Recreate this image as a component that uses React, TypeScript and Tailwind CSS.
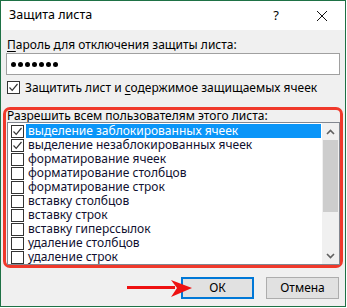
import React from "react";

const items: { label: string; checked: boolean }[] = [
  { label: "выделение заблокированных ячеек", checked: true },
  { label: "выделение незаблокированных ячеек", checked: true },
  { label: "форматирование ячеек", checked: false },
  { label: "форматирование столбцов", checked: false },
  { label: "форматирование строк", checked: false },
  { label: "вставку столбцов", checked: false },
  { label: "вставку строк", checked: false },
  { label: "вставку гиперссылок", checked: false },
  { label: "удаление столбцов", checked: false },
  { label: "удаление строк", checked: false },
];

function Check({ checked }: { checked: boolean }) {
  return (
    <span className="w-[13px] h-[13px] border border-[#333] bg-white flex items-center justify-center shrink-0">
      {checked && (
        <svg width="11" height="11" viewBox="0 0 11 11">
          <polyline points="1.5,5.5 4.2,8.3 9.5,2" fill="none" stroke="#333" strokeWidth="1.2" />
        </svg>
      )}
    </span>
  );
}

export default function App() {
  return (
    <div className="w-[347px] h-[308px] bg-white" style={{ fontFamily: '"Noto Sans", "Liberation Sans", sans-serif' }}>
      <div className="relative w-[346px] h-[307px] border border-[#1e7145] flex flex-col text-[12px] text-black">
        {/* title bar */}
        <div className="h-[29px] bg-white flex items-center pl-[8px] shrink-0">
          <span className="text-[12.5px] flex-1">Защита листа</span>
          <span className="text-[13px] mr-[37px]">?</span>
          <svg width="12" height="12" viewBox="0 0 12 12" className="mr-[17px]">
            <path d="M1 1 L11 11 M11 1 L1 11" stroke="#111" strokeWidth="1" />
          </svg>
        </div>

        {/* body */}
        <div className="flex-1 bg-[#f0f0f0] flex flex-col px-[5px]">
          <div className="h-[14px] leading-[14px] mt-[8px] pl-[1px]">
            <u className="underline-offset-2">П</u>ароль для отключения защиты листа:
          </div>
          <div className="h-[22px] mt-[1px] bg-white border border-[#a0a0a0] flex items-center gap-[2px] pl-[4px]">
            {Array.from({ length: 7 }).map((_, i) => (
              <span key={i} className="w-[5px] h-[5px] rounded-full bg-black" />
            ))}
          </div>
          <div className="flex items-center gap-[5px] mt-[6px] pl-[1px] h-[13px]">
            <Check checked />
            <span className="leading-[13px]">
              Защитить лист и <u className="underline-offset-2">с</u>одержимое защищаемых ячеек
            </span>
          </div>

          {/* red highlight frame */}
          <div className="mt-[13px] -mx-[3px] border-[3px] border-[#f0392b] rounded-[7px] flex flex-col">
            <div className="h-[12px] leading-[12px] pl-[1px]">
              Разре<u className="underline-offset-2">ш</u>ить всем пользователям этого листа:
            </div>
            <div className="ml-[1px] h-[143px] border border-[#828790] bg-white flex">
              <div className="flex-1 flex flex-col pt-[1px]">
                {items.map((it, i) => (
                  <div key={i} className="h-[14px] flex items-center">
                    <span className="pl-[3px] pr-[2px]">
                      <Check checked={it.checked} />
                    </span>
                    <span
                      className={
                        "flex-1 h-[14px] leading-[14px] pl-[2px] mr-[1px] " +
                        (i === 0 ? "bg-[#0a95f8] text-white" : "text-[#101030]")
                      }
                    >
                      {it.label}
                    </span>
                  </div>
                ))}
              </div>
              <div className="w-[17px] bg-[#f0f0f0] flex flex-col">
                <div className="h-[17px] flex items-center justify-center">
                  <svg width="9" height="6" viewBox="0 0 9 6">
                    <polyline points="1,5 4.5,1.5 8,5" fill="none" stroke="#606060" strokeWidth="1.6" />
                  </svg>
                </div>
                <div className="h-[72px] mx-[1px] bg-[#cdcdcd]" />
                <div className="flex-1" />
                <div className="h-[17px] flex items-center justify-center">
                  <svg width="9" height="6" viewBox="0 0 9 6">
                    <polyline points="1,1 4.5,4.5 8,1" fill="none" stroke="#606060" strokeWidth="1.6" />
                  </svg>
                </div>
              </div>
            </div>
          </div>

          {/* buttons */}
          <div className="flex justify-end gap-[12px] mt-[9px] pr-[1px]">
            <button className="w-[73px] h-[22px] bg-[#e1e1e1] border-2 border-[#0078d7] text-[12px]">ОК</button>
            <button className="w-[73px] h-[22px] bg-[#e1e1e1] border border-[#adadad] text-[12px]">Отмена</button>
          </div>
        </div>

        {/* red arrow overlay */}
        <svg className="absolute left-[126px] top-[278px]" width="66" height="20" viewBox="0 0 66 20">
          <path d="M0 8.5 H48 V8.5" stroke="#ee1111" strokeWidth="3" />
          <path d="M44 1 L65 9 L44 18 L50 9 Z" fill="#ee1111" />
        </svg>
      </div>
    </div>
  );
}
